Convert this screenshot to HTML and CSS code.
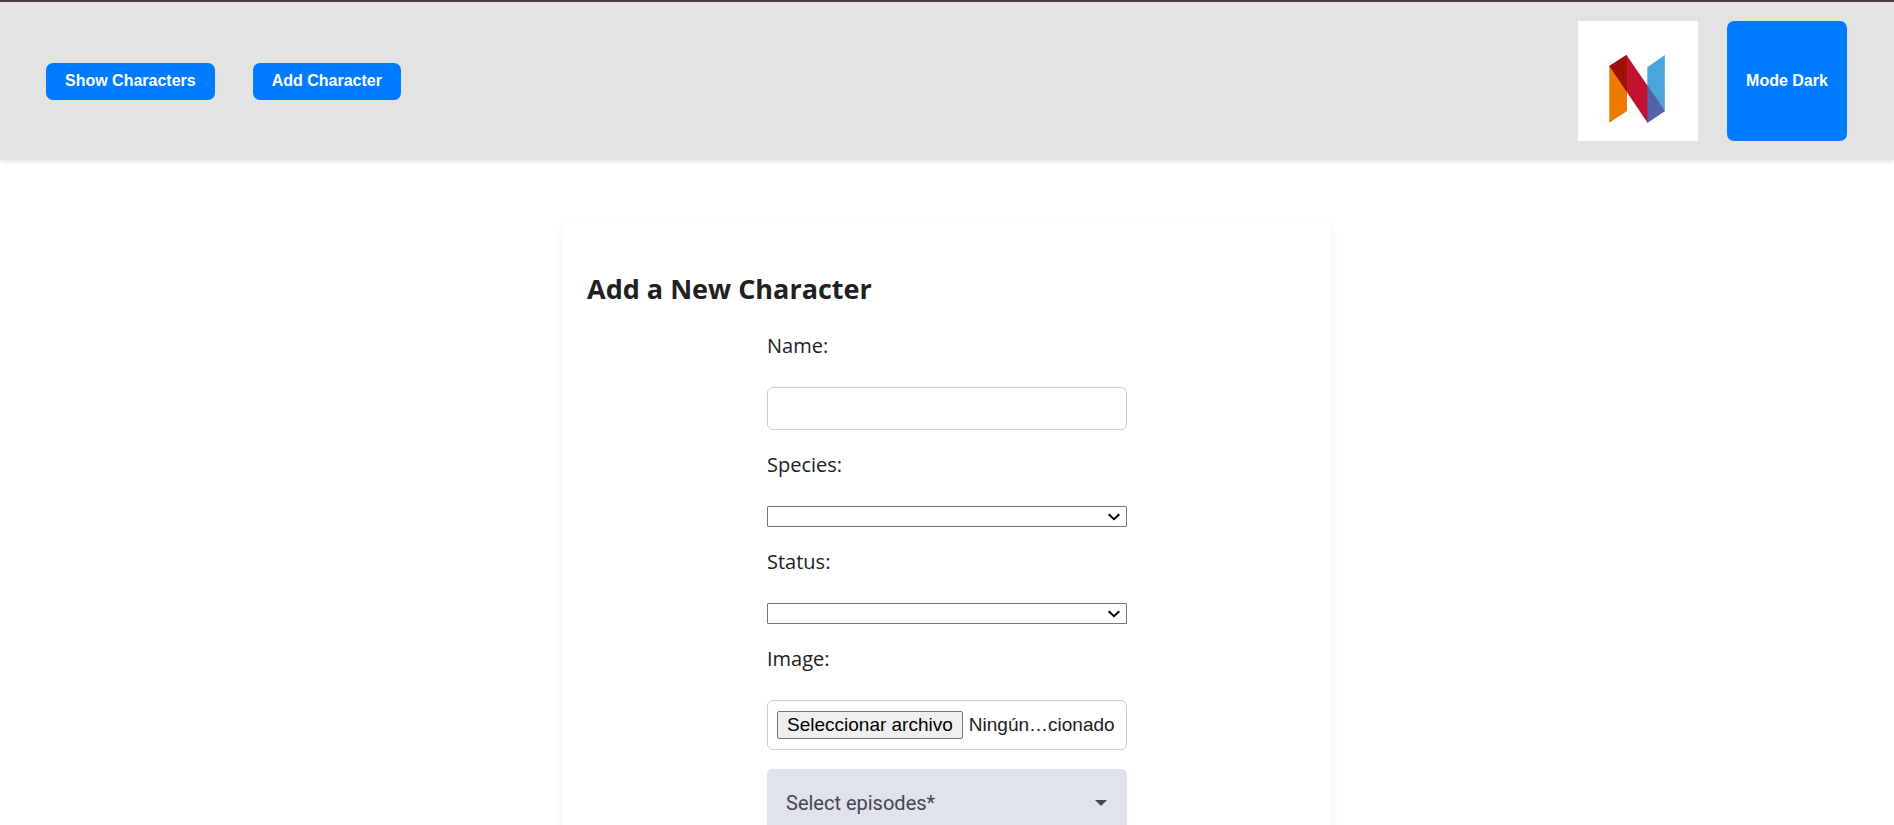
FILE: index.html
```html
<!DOCTYPE html>
<html lang="en">
<head>
<meta charset="utf-8">
<meta name="viewport" content="width=device-width, initial-scale=1">
<title>Add a New Character</title>
<link rel="stylesheet" href="styles.css">
</head>
<body>
<header class="topbar">
  <nav class="nav">
    <a class="btn" href="#characters">Show Characters</a>
    <a class="btn" href="#add">Add Character</a>
  </nav>
  <div class="tools">
    <svg class="logo" viewBox="0 0 120 120" role="img" aria-label="Logo">
      <rect width="120" height="120" fill="#fff"/>
      <path d="M31.300 45 49 71V90L31.300 101.700Z" fill="#ec7b00"/>
      <path d="M69.300 46.300 86.800 34V90L69.300 66Z" fill="#4ba5dd"/>
      <path d="M31.300 45 48.500 34 86.800 90 69.500 101.700Z" fill="#c4122e"/>
      <path d="M31.300 45 48.500 34 49 34.700V71Z" fill="#9e0f07"/>
      <path d="M69.300 64.500 86.800 90 69.300 101.700Z" fill="#5064a8"/>
    </svg>
    <button class="btn mode" type="button">Mode Dark</button>
  </div>
</header>
<main class="page">
  <section class="card" id="add">
    <h1 class="title">Add a New Character</h1>
    <form class="form">
      <label class="label" for="name">Name:</label>
      <input class="input" id="name" type="text">
      <label class="label" for="species">Species:</label>
      <div class="picker">
        <select class="select" id="species"><option></option></select>
        <svg class="chevron" viewBox="0 0 12 8" aria-hidden="true"><path d="M0.700 1.200 6 6.200 11.300 1.200"/></svg>
      </div>
      <label class="label" for="status">Status:</label>
      <div class="picker">
        <select class="select" id="status"><option></option></select>
        <svg class="chevron" viewBox="0 0 12 8" aria-hidden="true"><path d="M0.700 1.200 6 6.200 11.300 1.200"/></svg>
      </div>
      <label class="label" for="image">Image:</label>
      <label class="file">
        <input class="file-input" id="image" type="file">
        <span class="file-button">Seleccionar archivo</span>
        <span>Ningún…cionado</span>
      </label>
      <div class="picker">
        <select class="episodes" aria-label="Select episodes"><option>Select episodes*</option></select>
        <svg class="caret" viewBox="0 0 12 6" aria-hidden="true"><path d="M0 0H12L6 6Z"/></svg>
      </div>
    </form>
  </section>
</main>
</body>
</html>
```
FILE: styles.css
```css
* {
  box-sizing: border-box;
}

body {
  margin: 0;
  background: #fff;
  color: #212121;
  font-family: "Open Sans", "Noto Sans", sans-serif;
}

.topbar {
  display: flex;
  justify-content: space-between;
  align-items: center;
  padding: 19px 47px 19px 46px;
  background: #e3e3e3;
  border-top: 2px solid #4b3c42;
  box-shadow: 0 2px 5px rgba(0, 0, 0, 0.1);
}

.nav {
  display: flex;
  gap: 38px;
}

.tools {
  display: flex;
  gap: 29px;
}

.btn {
  padding: 9px 19px 10px;
  border: 0;
  border-radius: 7px;
  background: #007bff;
  color: #fff;
  font: bold 16px/18px "Liberation Sans", Arial, sans-serif;
  text-align: center;
  text-decoration: none;
  white-space: nowrap;
}

.logo,
.mode {
  width: 120px;
  height: 120px;
}

.mode {
  padding: 0;
}

.page {
  padding: 59px 24px;
}

.card {
  max-width: 768px;
  margin: 0 auto;
  padding: 50px 24px 24px;
  border-radius: 10px;
  box-shadow: 0 5px 10px rgba(255, 0, 0, 0.1);
}

.title {
  margin: 0 0 21px;
  font-size: 27px;
  line-height: 40px;
}

.form {
  display: flex;
  flex-direction: column;
  gap: 19px;
  max-width: 360px;
  margin: 0 auto;
}

.label {
  margin-bottom: 7px;
  font-size: 20px;
  line-height: 31px;
}

.input {
  height: 43px;
  padding: 9px;
  border: 1px solid #ccc;
  border-radius: 6px;
  background: #fff;
  font: 19px "Liberation Sans", Arial, sans-serif;
}

.picker {
  position: relative;
  display: grid;
}

.select {
  height: 21px;
  padding: 0 24px 0 4px;
  appearance: none;
  border: 1px solid #767676;
  border-radius: 1px;
  background: #fff;
}

.chevron {
  position: absolute;
  top: 7px;
  right: 7px;
  width: 12px;
  height: 8px;
  overflow: visible;
  fill: none;
  stroke: #000;
  stroke-width: 2;
  pointer-events: none;
}

.file {
  display: flex;
  align-items: center;
  gap: 6px;
  height: 50px;
  padding: 0 9px;
  border: 1px solid #ccc;
  border-radius: 6px;
  font: 19px/22px "Liberation Sans", Arial, sans-serif;
  white-space: nowrap;
}

.file-input {
  position: absolute;
  width: 1px;
  height: 1px;
  opacity: 0;
}

.file-button {
  padding: 2px 9px;
  border: 1px solid #767676;
  border-radius: 2px;
  background: #efefef;
  color: #000;
}

.episodes {
  height: 67px;
  padding: 0 48px 0 19px;
  appearance: none;
  border: 0;
  border-radius: 5px 5px 0 0;
  background: #e0e2ec;
  color: #44474e;
  font: 20px Roboto, sans-serif;
}

.caret {
  position: absolute;
  top: 31px;
  right: 20px;
  width: 12px;
  height: 6px;
  fill: #44474e;
  pointer-events: none;
}
```
